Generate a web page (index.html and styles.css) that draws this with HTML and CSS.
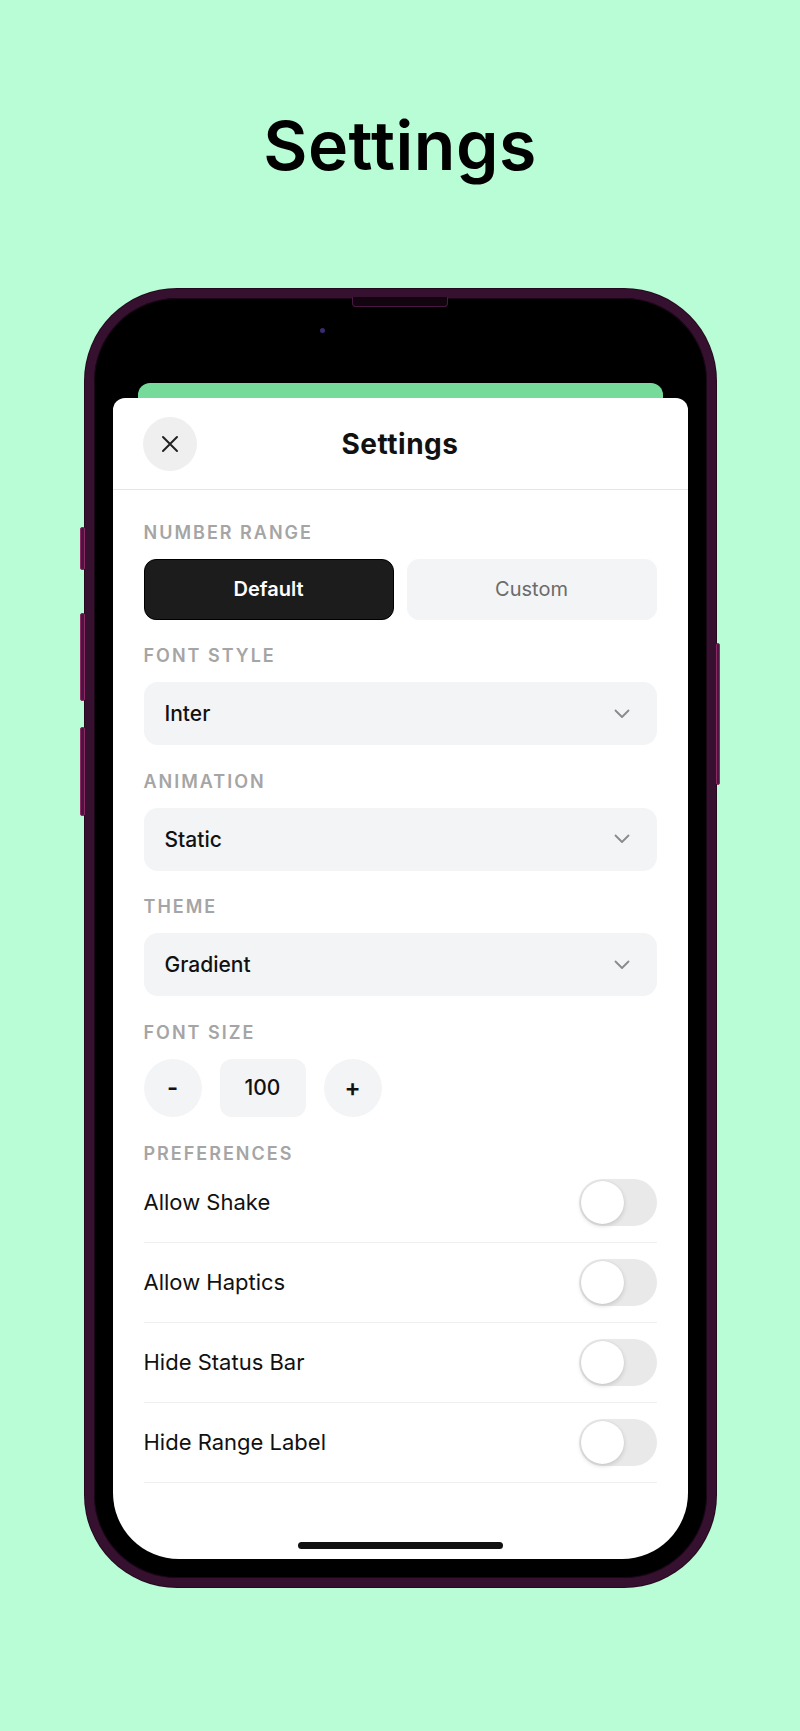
FILE: index.html
```html
<!DOCTYPE html>
<html lang="en">
<head>
    <meta charset="utf-8">
    <title>Settings</title>
    <link rel="stylesheet" href="styles.css">
</head>
<body>
<div class="page">
    <h1 class="page-title">Settings</h1>

    <div class="phone">
        <span class="side-btn side-btn-mute"></span>
        <span class="side-btn side-btn-vol-up"></span>
        <span class="side-btn side-btn-vol-down"></span>
        <span class="side-btn side-btn-power"></span>
        <span class="speaker"></span>
        <span class="camera"></span>

        <div class="screen">
            <div class="peek-card"></div>

            <div class="sheet">
                <header class="sheet-header">
                    <button class="close-btn" type="button">
                        <svg width="18" height="18" viewBox="0 0 18 18">
                            <path d="M2 2L16 16M16 2L2 16" stroke="#222" stroke-width="2" stroke-linecap="round" fill="none"/>
                        </svg>
                    </button>
                    <h2 class="sheet-title">Settings</h2>
                    <span class="header-spacer"></span>
                </header>

                <div class="sheet-body">
                    <section class="group first">
                        <div class="group-label">Number Range</div>
                        <div class="segmented">
                            <button class="seg active" type="button">Default</button>
                            <button class="seg" type="button">Custom</button>
                        </div>
                    </section>

                    <section class="group">
                        <div class="group-label">Font Style</div>
                        <div class="select">
                            <span>Inter</span>
                            <svg class="chevron" width="16" height="10" viewBox="0 0 16 10">
                                <path d="M1.5 1.5L8 8l6.5-6.5" stroke="#8a8a8a" stroke-width="1.8" stroke-linecap="round" stroke-linejoin="round" fill="none"/>
                            </svg>
                        </div>
                    </section>

                    <section class="group">
                        <div class="group-label">Animation</div>
                        <div class="select">
                            <span>Static</span>
                            <svg class="chevron" width="16" height="10" viewBox="0 0 16 10">
                                <path d="M1.5 1.5L8 8l6.5-6.5" stroke="#8a8a8a" stroke-width="1.8" stroke-linecap="round" stroke-linejoin="round" fill="none"/>
                            </svg>
                        </div>
                    </section>

                    <section class="group">
                        <div class="group-label">Theme</div>
                        <div class="select">
                            <span>Gradient</span>
                            <svg class="chevron" width="16" height="10" viewBox="0 0 16 10">
                                <path d="M1.5 1.5L8 8l6.5-6.5" stroke="#8a8a8a" stroke-width="1.8" stroke-linecap="round" stroke-linejoin="round" fill="none"/>
                            </svg>
                        </div>
                    </section>

                    <section class="group">
                        <div class="group-label">Font Size</div>
                        <div class="stepper">
                            <button class="step-btn" type="button">-</button>
                            <div class="step-value">100</div>
                            <button class="step-btn" type="button">+</button>
                        </div>
                    </section>

                    <section class="group">
                        <div class="group-label flush">Preferences</div>
                        <div class="pref-row">
                            <span>Allow Shake</span>
                            <span class="switch"><span class="knob"></span></span>
                        </div>
                        <div class="pref-row">
                            <span>Allow Haptics</span>
                            <span class="switch"><span class="knob"></span></span>
                        </div>
                        <div class="pref-row">
                            <span>Hide Status Bar</span>
                            <span class="switch"><span class="knob"></span></span>
                        </div>
                        <div class="pref-row">
                            <span>Hide Range Label</span>
                            <span class="switch"><span class="knob"></span></span>
                        </div>
                    </section>
                </div>

                <div class="home-bar"></div>
            </div>
        </div>
    </div>
</div>
</body>
</html>
```

FILE: styles.css
```css
html, body {
    margin: 0;
    background-color: #b9fdd6;
    font-family: "Inter", "Noto Sans", sans-serif;
    color: #111;
}

.page {
    display: flex;
    flex-direction: column;
    align-items: center;
    height: 1731px;
    padding-top: 105px;
    box-sizing: border-box;
}

.page-title {
    margin: 0;
    font-size: 68px;
    line-height: 80px;
    font-weight: 600;
    letter-spacing: 0.5px;
    color: #000;
}

/* phone frame */
.phone {
    position: relative;
    margin-top: 104px;
    width: 631px;
    height: 1298px;
    box-sizing: border-box;
    padding: 19px;
    background-color: #000;
    border: 9px solid #36102f;
    border-radius: 92px;
    box-shadow: inset 0 0 0 1px #1c0718, 0 0 0 1px #250920;
}

.side-btn {
    position: absolute;
    width: 5px;
    background-color: #4a1640;
    border: 1px solid #8c2a66;
    border-radius: 2px;
    box-sizing: border-box;
}

.side-btn-mute {
    left: -14px;
    top: 229px;
    height: 43px;
}

.side-btn-vol-up {
    left: -14px;
    top: 315px;
    height: 88px;
}

.side-btn-vol-down {
    left: -14px;
    top: 429px;
    height: 89px;
}

.side-btn-power {
    right: -13px;
    top: 345px;
    width: 4px;
    height: 142px;
}

.speaker {
    position: absolute;
    top: -1px;
    left: calc(50% - 48px);
    width: 96px;
    height: 10px;
    background-color: #12050f;
    border: 1px solid #4a1842;
    border-top: none;
    border-radius: 0 0 4px 4px;
    box-sizing: border-box;
}

.camera {
    position: absolute;
    top: 30px;
    left: 226px;
    width: 5px;
    height: 5px;
    border-radius: 50%;
    background-color: #3a2b6e;
}

.screen {
    display: flex;
    flex-direction: column;
    height: 100%;
    padding-top: 66px;
    box-sizing: border-box;
    background-color: #000;
    border-radius: 66px;
    overflow: hidden;
}

.peek-card {
    height: 15px;
    margin: 0 25px;
    background-color: #76da9b;
    border-radius: 12px 12px 0 0;
}

/* sheet */
.sheet {
    flex: 1;
    display: flex;
    flex-direction: column;
    background-color: #fff;
    border-radius: 12px 12px 0 0;
}

.sheet-header {
    display: flex;
    align-items: center;
    height: 91px;
    padding: 0 30px;
    border-bottom: 1px solid #e6e6e6;
}

.close-btn {
    display: flex;
    align-items: center;
    justify-content: center;
    width: 54px;
    height: 54px;
    padding: 0;
    border: none;
    border-radius: 50%;
    background-color: #efefef;
}

.header-spacer {
    width: 54px;
}

.sheet-title {
    flex: 1;
    margin: 0;
    text-align: center;
    font-size: 28px;
    font-weight: 700;
    letter-spacing: 0.5px;
    color: #111;
}

.sheet-body {
    padding: 0 31px;
}

.group {
    margin-top: 27.6px;
}

.group.first {
    margin-top: 33.6px;
}

.group-label {
    margin-bottom: 17px;
    font-size: 18px;
    line-height: 18px;
    font-weight: 600;
    letter-spacing: 2px;
    text-transform: uppercase;
    color: #a5a5a5;
}

.group-label.flush {
    margin-bottom: 0;
}

.segmented {
    display: flex;
    gap: 13px;
}

.seg {
    flex: 1;
    height: 61px;
    border: 1px solid #f3f4f6;
    border-radius: 12px;
    background-color: #f3f4f6;
    font-family: inherit;
    font-size: 20px;
    font-weight: 400;
    color: #6b6b6b;
}

.seg.active {
    background-color: #1c1c1c;
    border-color: #000;
    color: #fff;
    font-weight: 600;
}

.select {
    display: flex;
    align-items: center;
    justify-content: space-between;
    height: 63px;
    padding: 0 27px 0 21px;
    border-radius: 14px;
    background-color: #f3f4f6;
    font-size: 21px;
    font-weight: 500;
    color: #111;
}

.stepper {
    display: flex;
    gap: 18px;
}

.step-btn {
    width: 58px;
    height: 58px;
    padding: 0;
    border: none;
    border-radius: 50%;
    background-color: #f3f4f6;
    font-family: inherit;
    font-size: 24px;
    font-weight: 600;
    color: #111;
}

.step-value {
    display: flex;
    align-items: center;
    justify-content: center;
    width: 86px;
    height: 58px;
    border-radius: 12px;
    background-color: #f3f4f6;
    font-size: 21px;
    font-weight: 500;
}

.pref-row {
    display: flex;
    align-items: center;
    justify-content: space-between;
    padding: 16px 0;
    border-bottom: 1px solid #efefef;
    font-size: 22px;
    color: #111;
}

.switch {
    display: flex;
    align-items: center;
    width: 78px;
    height: 47px;
    padding: 0 2px;
    box-sizing: border-box;
    border-radius: 24px;
    background-color: #e9e9ea;
}

.knob {
    width: 43px;
    height: 43px;
    border-radius: 50%;
    background-color: #fff;
    box-shadow: 0 2px 5px rgba(0, 0, 0, 0.15), 0 0 0 0.5px rgba(0, 0, 0, 0.04);
}

.home-bar {
    width: 205px;
    height: 7px;
    margin: auto auto 10px;
    border-radius: 4px;
    background-color: #111;
}
```
